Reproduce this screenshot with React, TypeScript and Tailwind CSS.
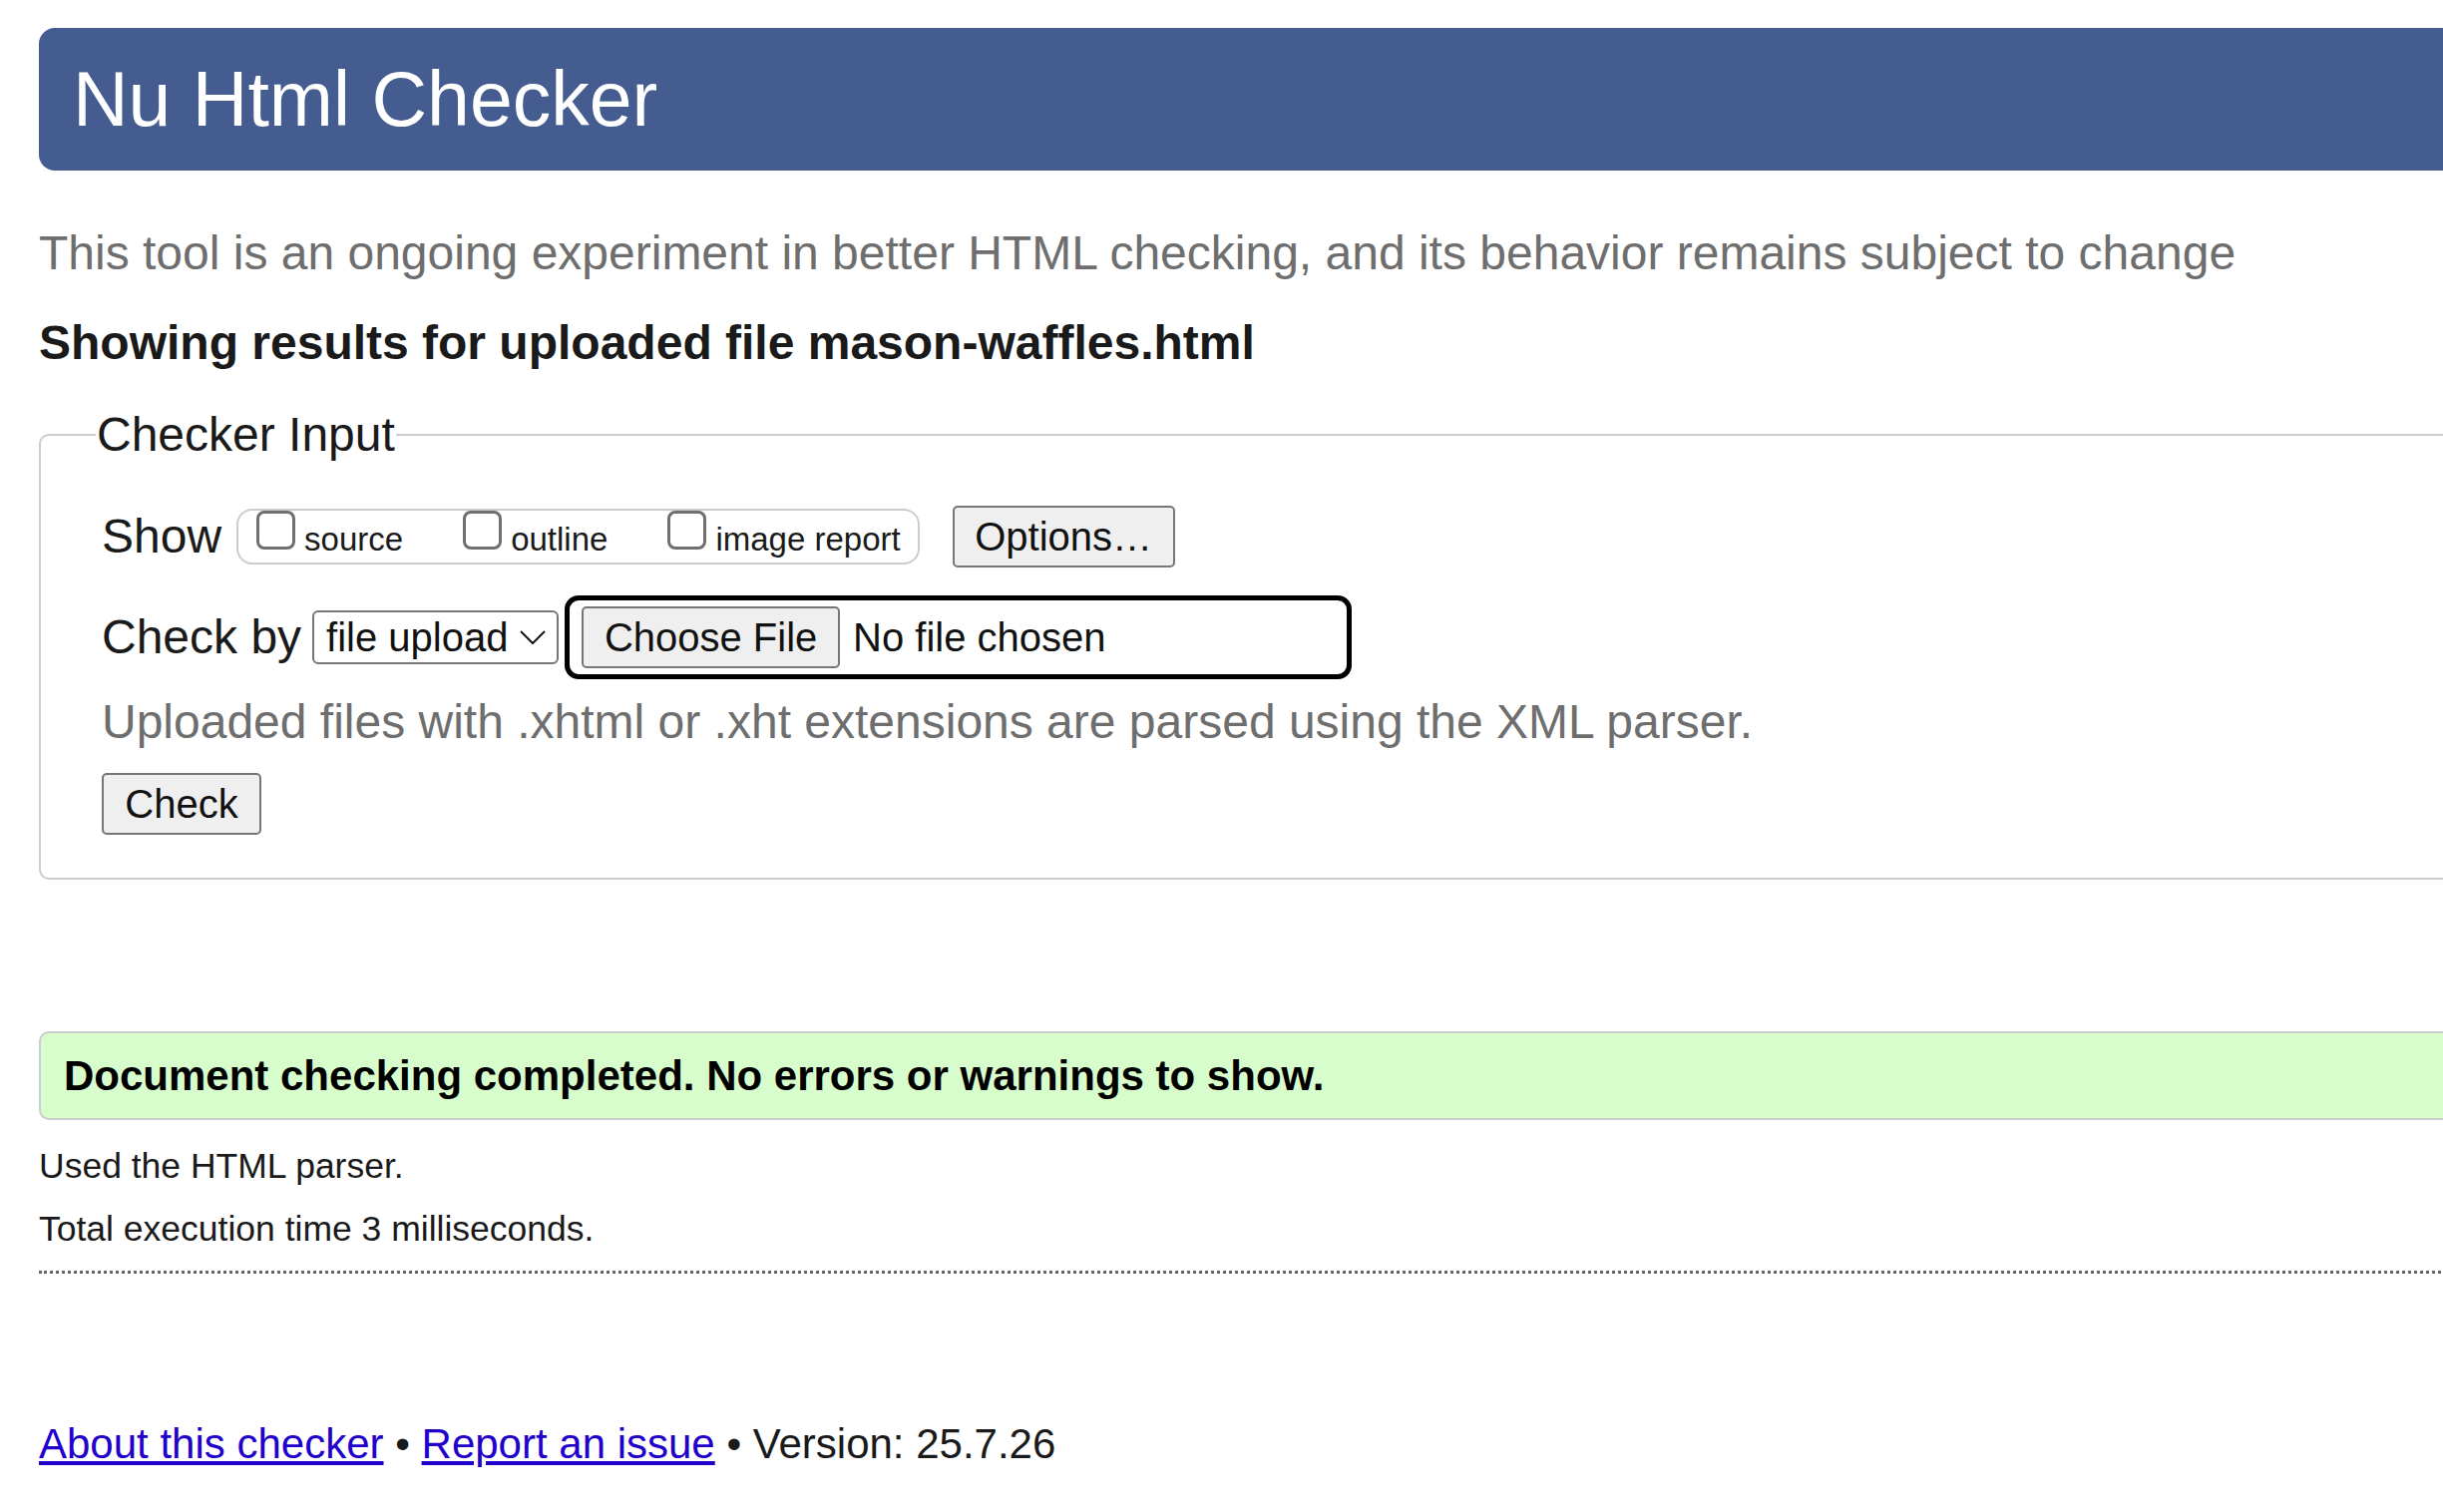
const checkboxes = ["source", "outline", "image report"];

function Checkbox({ label }: { label: string }) {
  return (
    <label className="flex items-start">
      <span className="block size-[39px] rounded-[8px] border-[3px] border-[#6f6f6f] bg-white" />
      <span className="ml-[9px] pt-[10px] text-[33px] leading-[38px]">{label}</span>
    </label>
  );
}

function GrayButton({ children, className }: { children: React.ReactNode; className?: string }) {
  return (
    <button
      type="button"
      className={
        "flex h-[62px] items-center justify-center rounded-[5px] border-2 border-[#767676] bg-[#efefef] text-[40px] leading-none text-[#111] " +
        (className ?? "")
      }
    >
      {children}
    </button>
  );
}

export default function App() {
  return (
    <div className="min-h-screen overflow-hidden bg-white pl-[39px] font-['Liberation_Sans',Arial,sans-serif] text-[#1a1a1a]">
      <h1 className="-mr-[40px] mt-[28px] flex h-[143px] items-center rounded-l-[16px] bg-[#445c90] pl-[34px] text-[77px] font-normal leading-none text-white">
        Nu Html Checker
      </h1>

      <p className="mt-[55px] text-[48px] leading-[56px] text-[#6e6e6e]">
        This tool is an ongoing experiment in better HTML checking, and its behavior remains subject to change
      </p>

      <h2 className="mt-[34px] text-[48px] font-bold leading-[56px]">
        Showing results for uploaded file mason-waffles.html
      </h2>

      <fieldset className="-mr-[40px] mt-[36px] rounded-[10px] border-2 border-[#cccccc] pb-[43px] pl-[61px] pt-[43px]">
        <legend className="-ml-[6px] px-[1px] text-[48px] leading-[56px]">Checker Input</legend>

        <div className="flex h-[61px] items-center">
          <span className="text-[48px] leading-[56px]">Show</span>
          <div className="ml-[15px] flex h-[56px] items-start gap-[60px] rounded-[16px] border-2 border-[#cccccc] pl-[18px] pr-[17px]">
            {checkboxes.map((c) => (
              <Checkbox key={c} label={c} />
            ))}
          </div>
          <GrayButton className="ml-[33px] w-[223px]">Options…</GrayButton>
        </div>

        <div className="mt-[29px] flex h-[84px] items-center">
          <span className="text-[48px] leading-[56px]">Check by</span>
          <div className="ml-[11px] flex h-[54px] w-[247px] items-center justify-between rounded-[6px] border-2 border-[#767676] pl-[12px] pr-[11px]">
            <span className="text-[40px] leading-none text-[#111]">file upload</span>
            <svg width="26" height="14" viewBox="0 0 26 14" fill="none" stroke="#111" strokeWidth="2">
              <path d="M1 1l12 12L25 1" />
            </svg>
          </div>
          <div className="ml-[6px] flex h-[84px] w-[789px] items-center rounded-[14px] border-[5px] border-black pl-[12px]">
            <GrayButton className="w-[259px]">Choose File</GrayButton>
            <span className="ml-[13px] text-[40px] leading-none text-[#111]">No file chosen</span>
          </div>
        </div>

        <p className="mt-[15px] text-[48px] leading-[56px] text-[#6e6e6e]">
          Uploaded files with .xhtml or .xht extensions are parsed using the XML parser.
        </p>

        <GrayButton className="mt-[23px] w-[160px]">Check</GrayButton>
      </fieldset>

      <div className="-mr-[40px] mt-[152px] flex h-[89px] items-center rounded-l-[10px] border-2 border-[#cccccc] bg-[#d8fdcc] pl-[23px]">
        <span className="text-[42px] font-bold leading-none text-black">
          Document checking completed. No errors or warnings to show.
        </span>
      </div>

      <p className="mt-[26px] text-[35.5px] leading-[40px]">Used the HTML parser.</p>
      <p className="mt-[23px] text-[35.5px] leading-[40px]">Total execution time 3 milliseconds.</p>

      <hr className="-mr-[40px] mt-[22px] border-0 border-t-[3px] border-dotted border-[#666666]" />

      <p className="mt-[147px] text-[42px] leading-[48px]">
        <a href="#" className="text-[#2200cc] underline">About this checker</a>
        {" • "}
        <a href="#" className="text-[#2200cc] underline">Report an issue</a>
        {" • Version: 25.7.26"}
      </p>
    </div>
  );
}
